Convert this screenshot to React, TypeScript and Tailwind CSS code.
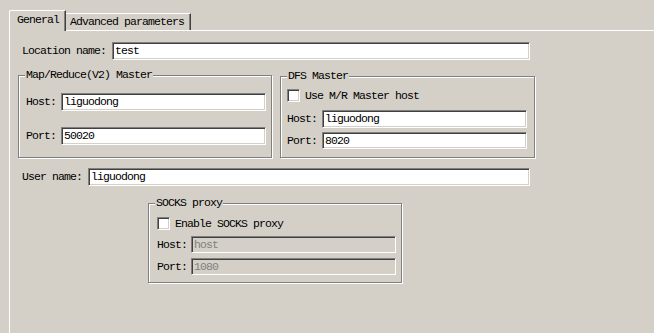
import React from "react";

const input =
  "box-border border border-t-[#808080] border-l-[#808080] border-r-white border-b-white shadow-[inset_1px_1px_0_#404040,inset_-1px_-1px_0_#d4d0c8] px-[2px] flex items-center leading-[12px]";

function Field({ value, w, h = 18, disabled = false }: { value: string; w: number; h?: number; disabled?: boolean }) {
  return (
    <div
      className={input + (disabled ? " bg-[#d4d0c8] text-[#808080]" : " bg-white text-black")}
      style={{ width: w, height: h }}
    >
      {value}
    </div>
  );
}

function Check() {
  return (
    <div className="box-border w-[13px] h-[13px] bg-white border border-t-[#808080] border-l-[#808080] border-r-white border-b-white shadow-[inset_1px_1px_0_#404040,inset_-1px_-1px_0_#d4d0c8]" />
  );
}

function Group({ title, children, className }: { title: string; children: React.ReactNode; className: string }) {
  return (
    <div
      className={
        "relative box-border border border-[#808080] shadow-[1px_1px_0_white,inset_1px_1px_0_white] " + className
      }
    >
      <span className="absolute left-[6px] top-[-7px] bg-[#d4d0c8] px-[1px] leading-[12px]">{title}</span>
      {children}
    </div>
  );
}

export default function App() {
  return (
    <div className="w-[654px] h-[333px] overflow-hidden bg-[#d4d0c8] text-black font-[family-name:'Liberation_Mono',monospace] text-[11.5px] tracking-[-0.9px] leading-[12px] pl-[9px] pt-[10px] flex flex-col">
      <div className="flex items-end h-[20px] relative z-10">
        <div className="box-border w-[57px] h-[21px] -mb-[1px] bg-[#d4d0c8] border-l border-t border-white border-r border-r-[#404040] rounded-tl-[2px] shadow-[inset_-1px_0_0_#808080] pl-[7px] pt-[3px]">
          General
        </div>
        <div className="box-border w-[125px] h-[17px] border-t border-white border-r border-r-[#404040] shadow-[inset_-1px_0_0_#808080] pl-[4px] pt-[2px]">
          Advanced parameters
        </div>
      </div>
      <div className="flex-1 border-l border-t border-white flex flex-col">
        <div className="flex items-center mt-[11px] ml-[12px]">
          <div className="w-[90px]">Location name:</div>
          <Field value="test" w={418} />
        </div>
        <div className="flex items-start mt-[15px] ml-[8px]">
          <Group title="Map/Reduce(V2) Master" className="w-[254px] h-[83px] pt-[17px] pl-[7px]">
            <div className="flex items-center">
              <div className="w-[35px]">Host:</div>
              <Field value="liguodong" w={205} />
            </div>
            <div className="flex items-center mt-[16px]">
              <div className="w-[35px]">Port:</div>
              <Field value="50020" w={205} />
            </div>
          </Group>
          <Group title="DFS Master" className="ml-[8px] mt-[1px] w-[255px] h-[82px] pt-[12px] pl-[6px]">
            <div className="flex items-center">
              <Check />
              <span className="ml-[5px]">Use M/R Master host</span>
            </div>
            <div className="flex items-center mt-[8px]">
              <div className="w-[35px]">Host:</div>
              <Field value="liguodong" w={205} h={18} />
            </div>
            <div className="flex items-center mt-[4px]">
              <div className="w-[35px]">Port:</div>
              <Field value="8020" w={205} h={17} />
            </div>
          </Group>
        </div>
        <div className="flex items-center mt-[10px] ml-[12px]">
          <div className="w-[66px]">User name:</div>
          <Field value="liguodong" w={442} />
        </div>
        <Group title="SOCKS proxy" className="ml-[138px] mt-[17px] w-[254px] h-[80px] pt-[13px] pl-[8px]">
          <div className="flex items-center">
            <Check />
            <span className="ml-[5px]">Enable SOCKS proxy</span>
          </div>
          <div className="flex items-center mt-[6px]">
            <div className="w-[34px]">Host:</div>
            <Field value="host" w={205} h={17} disabled />
          </div>
          <div className="flex items-center mt-[5px]">
            <div className="w-[34px]">Port:</div>
            <Field value="1080" w={205} h={17} disabled />
          </div>
        </Group>
      </div>
    </div>
  );
}
